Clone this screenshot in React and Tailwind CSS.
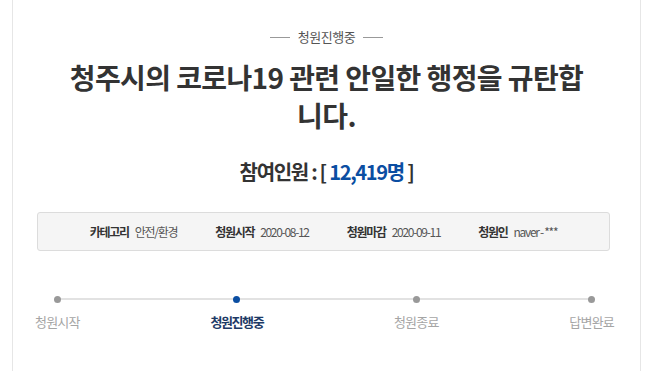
export default function App() {
  const steps = [
    { label: "청원시작", active: false },
    { label: "청원진행중", active: true },
    { label: "청원종료", active: false },
    { label: "답변완료", active: false },
  ];

  const info = [
    { k: "카테고리", v: "안전/환경" },
    { k: "청원시작", v: "2020-08-12" },
    { k: "청원마감", v: "2020-09-11" },
    { k: "청원인", v: "naver - ***" },
  ];

  return (
    <div
      className="min-h-[371px] bg-white"
      style={{ fontFamily: '"Noto Sans CJK KR", "Noto Sans", sans-serif' }}
    >
      <div className="ml-3 w-[629px] min-h-[371px] border-x border-[#e6e6e6] pt-[27px]">
        {/* status */}
        <div className="flex items-center justify-center gap-2 text-[13px] leading-5 text-[#555] tracking-[-0.5px]">
          <span className="block h-px w-5 bg-[#999]" />
          <span>청원진행중</span>
          <span className="block h-px w-5 bg-[#999]" />
        </div>

        {/* title */}
        <h1 className="mx-auto mt-[11px] w-[530px] text-center text-[28px] font-bold leading-[38px] tracking-[-0.6px] text-[#333]">
          청주시의 코로나19 관련 안일한 행정을 규탄합니다.
        </h1>

        {/* count */}
        <p className="mt-[24px] text-center text-[20px] font-bold leading-7 tracking-[-1.3px] text-[#333]">
          참여인원 : [ <span className="text-[#0b4ea2]">12,419명</span> ]
        </p>

        {/* info box */}
        <div className="ml-6 mt-[26px] flex h-[39px] w-[573px] items-center justify-center gap-[38px] rounded-[3px] border border-[#dcdcdc] bg-[#f5f5f5] text-[12px] tracking-[-1.3px]">
          {info.map((it) => (
            <div key={it.k} className="flex items-center gap-[6px]">
              <span className="font-bold text-[#333]">{it.k}</span>
              <span className="text-[#555]">{it.v}</span>
            </div>
          ))}
        </div>

        {/* progress */}
        <div className="relative ml-[22px] mt-[45px] flex w-[579px] justify-between">
          <div className="absolute left-[21px] right-[21px] top-[2px] h-[2px] bg-[#e2e2e2]" />
          {steps.map((s) => (
            <div key={s.label} className="relative flex flex-col items-center">
              <span
                className={
                  s.active
                    ? "block h-[7px] w-[7px] rounded-full bg-[#0b4ea2]"
                    : "block h-[7px] w-[7px] rounded-full bg-[#999]"
                }
              />
              <span
                className={
                  s.active
                    ? "mt-[10px] text-[13px] leading-[18px] font-bold tracking-[-1.4px] text-[#1d3a66]"
                    : "mt-[10px] text-[13px] leading-[18px] tracking-[-0.8px] text-[#a5a5a5]"
                }
              >
                {s.label}
              </span>
            </div>
          ))}
        </div>
      </div>
    </div>
  );
}
